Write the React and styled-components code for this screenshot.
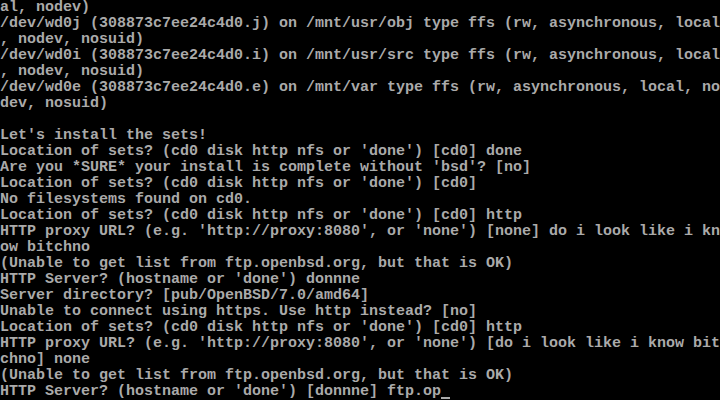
import React from "react";
import styled, { createGlobalStyle } from "styled-components";

const GlobalStyle = createGlobalStyle`
  html, body {
    margin: 0;
    padding: 0;
    background: #000;
  }
`;

const Screen = styled.div`
  width: 720px;
  height: 400px;
  overflow: hidden;
  background: #000;
  color: #aaaaaa;
  font-family: "Liberation Mono", "DejaVu Sans Mono", monospace;
  font-size: 15px;
  font-weight: bold;
  display: flex;
  flex-direction: column;
`;

const Line = styled.div`
  height: 16px;
  line-height: 16px;
  white-space: pre;
  position: relative;
`;

const Cursor = styled.span`
  display: inline-block;
  width: 9px;
  height: 16px;
  vertical-align: top;
  position: relative;

  &::after {
    content: "";
    position: absolute;
    left: 0;
    right: 0;
    bottom: 1px;
    height: 2px;
    background: #aaaaaa;
  }
`;

const lines = [
  "al, nodev)",
  "/dev/wd0j (308873c7ee24c4d0.j) on /mnt/usr/obj type ffs (rw, asynchronous, local",
  ", nodev, nosuid)",
  "/dev/wd0i (308873c7ee24c4d0.i) on /mnt/usr/src type ffs (rw, asynchronous, local",
  ", nodev, nosuid)",
  "/dev/wd0e (308873c7ee24c4d0.e) on /mnt/var type ffs (rw, asynchronous, local, no",
  "dev, nosuid)",
  "",
  "Let's install the sets!",
  "Location of sets? (cd0 disk http nfs or 'done') [cd0] done",
  "Are you *SURE* your install is complete without 'bsd'? [no]",
  "Location of sets? (cd0 disk http nfs or 'done') [cd0]",
  "No filesystems found on cd0.",
  "Location of sets? (cd0 disk http nfs or 'done') [cd0] http",
  "HTTP proxy URL? (e.g. 'http://proxy:8080', or 'none') [none] do i look like i kn",
  "ow bitchno",
  "(Unable to get list from ftp.openbsd.org, but that is OK)",
  "HTTP Server? (hostname or 'done') donnne",
  "Server directory? [pub/OpenBSD/7.0/amd64]",
  "Unable to connect using https. Use http instead? [no]",
  "Location of sets? (cd0 disk http nfs or 'done') [cd0] http",
  "HTTP proxy URL? (e.g. 'http://proxy:8080', or 'none') [do i look like i know bit",
  "chno] none",
  "(Unable to get list from ftp.openbsd.org, but that is OK)",
];

const prompt = "HTTP Server? (hostname or 'done') [donnne] ftp.op";

const App = () => {
  return (
    <>
      <GlobalStyle />
      <Screen>
        {lines.map((text, i) => (
          <Line key={i}>{text}</Line>
        ))}
        <Line>
          {prompt}
          <Cursor />
        </Line>
      </Screen>
    </>
  );
};

export default App;
